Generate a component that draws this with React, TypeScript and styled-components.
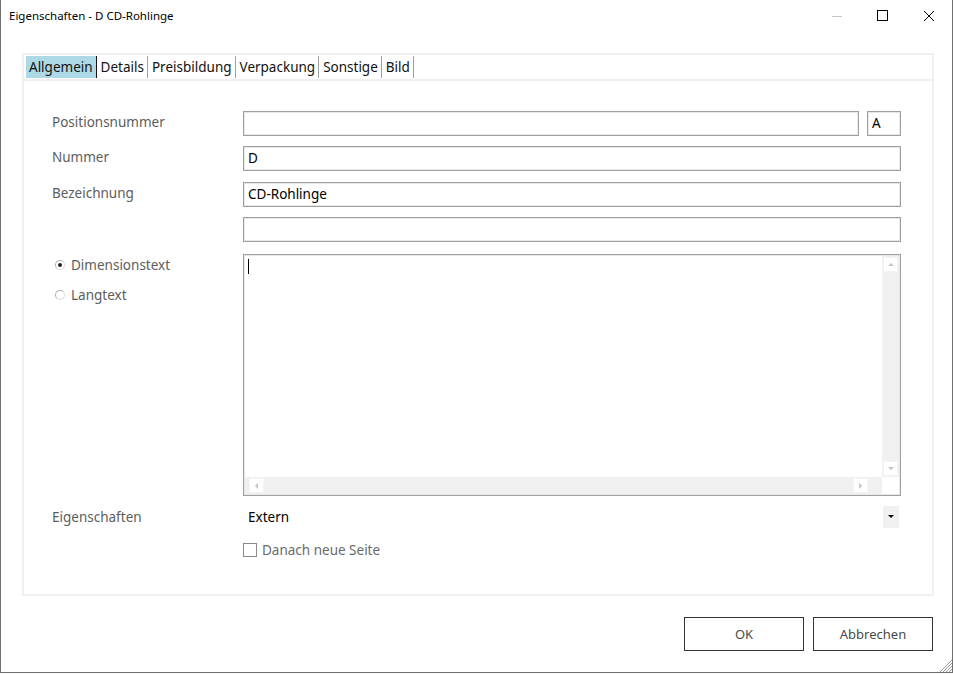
import styled, { createGlobalStyle } from "styled-components";

const GlobalStyle = createGlobalStyle`
  html, body {
    margin: 0;
    padding: 0;
    background: #ffffff;
  }
  * {
    box-sizing: border-box;
  }
`;

const Window = styled.div`
  width: 953px;
  height: 673px;
  display: flex;
  flex-direction: column;
  background: #ffffff;
  border-left: 1px solid #707070;
  border-right: 1px solid #707070;
  border-bottom: 1px solid #707070;
  font-family: "Noto Sans", "Open Sans", sans-serif;
  position: relative;
`;

const TitleBar = styled.div`
  height: 31px;
  display: flex;
  align-items: center;
  padding-left: 8px;
  font-size: 11.5px;
  color: #000;
`;

const Title = styled.div`
  flex: 1;
`;

const Caption = styled.div`
  width: 46px;
  height: 31px;
  display: flex;
  align-items: center;
  justify-content: center;
`;

const Body = styled.div`
  flex: 1;
  display: flex;
  flex-direction: column;
  padding: 22px 18px 0 21px;
`;

const Panel = styled.div`
  height: 543px;
  border: 2px solid #f0f0f0;
  display: flex;
  flex-direction: column;
`;

const TabStrip = styled.div`
  display: flex;
  padding: 1px 2px 0 2px;
  height: 26px;
  border-bottom: 2px solid #f0f0f0;
`;

const Tab = styled.div<{ $active?: boolean }>`
  height: 22px;
  padding: 0 3px 0 3px;
  font-size: 13.5px;
  line-height: 22px;
  color: #111;
  background: ${(p) => (p.$active ? "#add8e6" : "transparent")};
  border-right: 1px solid ${(p) => (p.$active ? "#111" : "#a0a0a0")};
  margin-right: 1px;
`;

const Form = styled.div`
  display: grid;
  grid-template-columns: 191px 1fr;
  grid-template-rows: 35px 36px 35px 37px 252px 36px auto;
  align-items: start;
  padding: 30px 31px 0 28px;
`;

const Label = styled.div`
  font-size: 13.5px;
  color: #5d5d5d;
  height: 25px;
  line-height: 23px;
`;

const InputRow = styled.div`
  display: flex;
  gap: 8px;
`;

const TextBox = styled.div<{ $w?: number }>`
  height: 25px;
  ${(p) => (p.$w ? `width: ${p.$w}px;` : "flex: 1;")}
  border: 1px solid #a0a0a0;
  box-shadow: inset 0 0 0 1px #e8e8e8;
  padding-left: 4px;
  font-size: 13.5px;
  line-height: 22px;
  color: #000;
`;

const RadioList = styled.div`
  display: flex;
  flex-direction: column;
  gap: 8px;
  padding-left: 3px;
`;

const RadioItem = styled.div`
  display: flex;
  align-items: center;
  gap: 6px;
  height: 22px;
  font-size: 13.5px;
  color: #5d5d5d;
`;

const RadioDot = styled.span<{ $checked?: boolean }>`
  width: 10px;
  height: 10px;
  border-radius: 50%;
  border: 1px solid #b0b0b0;
  border-right-color: #dcdcdc;
  border-bottom-color: #dcdcdc;
  display: flex;
  align-items: center;
  justify-content: center;
  &::after {
    content: "";
    width: 4px;
    height: 4px;
    border-radius: 50%;
    background: ${(p) => (p.$checked ? "#222" : "transparent")};
  }
`;

const TextArea = styled.div`
  height: 242px;
  border: 1px solid #a0a0a0;
  box-shadow: inset 0 0 0 1px #e8e8e8;
  display: grid;
  grid-template-columns: 1fr 17px;
  grid-template-rows: 1fr 17px;
  padding: 1px;
`;

const TextContent = styled.div`
  padding: 3px 3px;
`;

const Caret = styled.div`
  width: 1px;
  height: 15px;
  background: #000;
`;

const VScroll = styled.div`
  background: #f0f0f0;
  display: flex;
  flex-direction: column;
  justify-content: space-between;
  padding: 1px 1px;
`;

const HScroll = styled.div`
  background: #f0f0f0;
  display: flex;
  justify-content: space-between;
  padding: 1px 14px 1px 4px;
`;

const Corner = styled.div`
  background: #ffffff;
`;

const ArrowBtn = styled.div`
  width: 15px;
  height: 15px;
  background: #ffffff;
  border: 1px solid #f4f4f4;
  display: flex;
  align-items: center;
  justify-content: center;
`;

const Combo = styled.div`
  height: 22px;
  display: flex;
  align-items: center;
  padding-left: 5px;
  font-size: 13.5px;
  color: #000;
`;

const ComboText = styled.div`
  flex: 1;
`;

const ComboBtn = styled.div`
  width: 16px;
  height: 22px;
  margin-right: 2px;
  background: #f0f0f0;
  display: flex;
  align-items: center;
  justify-content: center;
`;

const CheckRow = styled.div`
  display: flex;
  align-items: center;
  gap: 5px;
  height: 15px;
  font-size: 13.5px;
  color: #6a6a6a;
`;

const CheckBox = styled.span`
  width: 14px;
  height: 14px;
  border: 1px solid #8a8a8a;
  background: #fff;
`;

const Footer = styled.div`
  display: flex;
  justify-content: flex-end;
  gap: 9px;
  padding-top: 21px;
  padding-right: 1px;
`;

const Button = styled.div`
  width: 120px;
  height: 34px;
  border: 1px solid #333;
  display: flex;
  align-items: center;
  justify-content: center;
  font-size: 13px;
  color: #4a4a4a;
`;

const Grip = styled.svg`
  position: absolute;
  right: 0;
  bottom: 0;
`;

const Tri = ({ dir, color }: { dir: "up" | "down" | "left" | "right"; color: string }) => {
  const pts = {
    up: "1,5 4,2 7,5",
    down: "1,2 4,5 7,2",
    left: "5,1 2,4 5,7",
    right: "2,1 5,4 2,7",
  }[dir];
  return (
    <svg width="8" height="8" viewBox="0 0 8 8">
      <polygon points={pts} fill={color} />
    </svg>
  );
};

export default function App() {
  const tabs = ["Allgemein", "Details", "Preisbildung", "Verpackung", "Sonstige", "Bild"];
  return (
    <>
      <GlobalStyle />
      <Window>
        <TitleBar>
          <Title>Eigenschaften - D CD-Rohlinge</Title>
          <Caption>
            <svg width="12" height="12" viewBox="0 0 12 12">
              <line x1="1" y1="6.5" x2="11" y2="6.5" stroke="#c8c8c8" strokeWidth="1" />
            </svg>
          </Caption>
          <Caption>
            <svg width="12" height="12" viewBox="0 0 12 12">
              <rect x="0.5" y="0.5" width="10" height="10" fill="none" stroke="#000" strokeWidth="1" />
            </svg>
          </Caption>
          <Caption>
            <svg width="12" height="12" viewBox="0 0 12 12">
              <path d="M1 1 L11 11 M11 1 L1 11" stroke="#000" strokeWidth="1" />
            </svg>
          </Caption>
        </TitleBar>
        <Body>
          <Panel>
            <TabStrip>
              {tabs.map((t, i) => (
                <Tab key={t} $active={i === 0}>
                  {t}
                </Tab>
              ))}
            </TabStrip>
            <Form>
              <Label>Positionsnummer</Label>
              <InputRow>
                <TextBox />
                <TextBox $w={34}>A</TextBox>
              </InputRow>
              <Label>Nummer</Label>
              <TextBox>D</TextBox>
              <Label>Bezeichnung</Label>
              <TextBox>CD-Rohlinge</TextBox>
              <Label />
              <TextBox />
              <RadioList>
                <RadioItem>
                  <RadioDot $checked />
                  Dimensionstext
                </RadioItem>
                <RadioItem>
                  <RadioDot />
                  Langtext
                </RadioItem>
              </RadioList>
              <TextArea>
                <TextContent>
                  <Caret />
                </TextContent>
                <VScroll>
                  <ArrowBtn>
                    <Tri dir="up" color="#c4c4c4" />
                  </ArrowBtn>
                  <ArrowBtn>
                    <Tri dir="down" color="#c4c4c4" />
                  </ArrowBtn>
                </VScroll>
                <HScroll>
                  <ArrowBtn>
                    <Tri dir="left" color="#c4c4c4" />
                  </ArrowBtn>
                  <ArrowBtn>
                    <Tri dir="right" color="#c4c4c4" />
                  </ArrowBtn>
                </HScroll>
                <Corner />
              </TextArea>
              <Label>Eigenschaften</Label>
              <Combo>
                <ComboText>Extern</ComboText>
                <ComboBtn>
                  <Tri dir="down" color="#000" />
                </ComboBtn>
              </Combo>
              <div />
              <CheckRow>
                <CheckBox />
                Danach neue Seite
              </CheckRow>
            </Form>
          </Panel>
          <Footer>
            <Button>OK</Button>
            <Button>Abbrechen</Button>
          </Footer>
        </Body>
        <Grip width="14" height="14" viewBox="0 0 14 14">
          {[3, 6, 9, 12].map((o) => (
            <line key={o} x1={14 - o} y1="14" x2="14" y2={14 - o} stroke="#9a9a9a" strokeWidth="1" />
          ))}
        </Grip>
      </Window>
    </>
  );
}
